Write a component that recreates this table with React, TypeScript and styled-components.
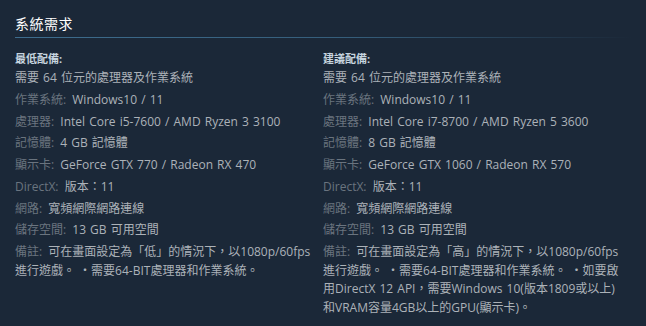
import React from 'react';
import styled, { createGlobalStyle } from 'styled-components';

const GlobalStyle = createGlobalStyle`
  html, body {
    margin: 0;
    padding: 0;
    background: #1b2838;
  }
  body {
    font-family: "Open Sans", "Noto Sans CJK TC", sans-serif;
  }
`;

const Page = styled.div`
  width: 646px;
  height: 326px;
  box-sizing: border-box;
  padding: 14px 15px 0 15px;
  background: #1b2838;
  overflow: hidden;
`;

const Title = styled.h2`
  margin: 0;
  padding: 0 0 3px 0;
  font-size: 14px;
  line-height: 20px;
  font-weight: normal;
  letter-spacing: 0.5px;
  color: #ffffff;
  border-bottom: 1px solid transparent;
  border-image: linear-gradient(90deg, #3e6d8e 0%, #355d7a 55%, rgba(27, 40, 56, 0) 100%) 1;
`;

const Columns = styled.div`
  display: grid;
  grid-template-columns: 302px 302px;
  column-gap: 6px;
  margin-top: 12px;
`;

const Column = styled.div`
  display: flex;
  flex-direction: column;
`;

const ColumnHead = styled.div`
  font-size: 11px;
  line-height: 18px;
  font-weight: bold;
  color: #c6d4df;
  margin-bottom: 1px;
`;

const SpecList = styled.ul`
  list-style: none;
  margin: 0;
  padding: 0;
`;

const Spec = styled.li`
  font-size: 12px;
  line-height: 18.5px;
  word-spacing: 1px;
  color: #acb2b8;
  margin-bottom: 3.25px;
`;

const Label = styled.span`
  color: #6a747f;
  margin-right: 2px;
`;

interface Requirement {
  label?: string;
  value: string;
}

interface SpecColumn {
  heading: string;
  items: Requirement[];
}

const columns: SpecColumn[] = [
  {
    heading: '最低配備:',
    items: [
      { value: '需要 64 位元的處理器及作業系統' },
      { label: '作業系統:', value: 'Windows10 / 11' },
      { label: '處理器:', value: 'Intel Core i5-7600 / AMD Ryzen 3 3100' },
      { label: '記憶體:', value: '4 GB 記憶體' },
      { label: '顯示卡:', value: 'GeForce GTX 770 / Radeon RX 470' },
      { label: 'DirectX:', value: '版本：11' },
      { label: '網路:', value: '寬頻網際網路連線' },
      { label: '儲存空間:', value: '13 GB 可用空間' },
      {
        label: '備註:',
        value: '可在畫面設定為「低」的情況下，以1080p/60fps進行遊戲。 ・需要64-BIT處理器和作業系統。',
      },
    ],
  },
  {
    heading: '建議配備:',
    items: [
      { value: '需要 64 位元的處理器及作業系統' },
      { label: '作業系統:', value: 'Windows10 / 11' },
      { label: '處理器:', value: 'Intel Core i7-8700 / AMD Ryzen 5 3600' },
      { label: '記憶體:', value: '8 GB 記憶體' },
      { label: '顯示卡:', value: 'GeForce GTX 1060 / Radeon RX 570' },
      { label: 'DirectX:', value: '版本：11' },
      { label: '網路:', value: '寬頻網際網路連線' },
      { label: '儲存空間:', value: '13 GB 可用空間' },
      {
        label: '備註:',
        value:
          '可在畫面設定為「高」的情況下，以1080p/60fps進行遊戲。 ・需要64-BIT處理器和作業系統。 ・如要啟用DirectX 12 API，需要Windows 10(版本1809或以上)和VRAM容量4GB以上的GPU(顯示卡)。',
      },
    ],
  },
];

export default function App() {
  return (
    <>
      <GlobalStyle />
      <Page>
        <Title>系統需求</Title>
        <Columns>
          {columns.map((col) => (
            <Column key={col.heading}>
              <ColumnHead>{col.heading}</ColumnHead>
              <SpecList>
                {col.items.map((item, i) => (
                  <Spec key={i}>
                    {item.label && <><Label>{item.label}</Label> </>}
                    {item.value}
                  </Spec>
                ))}
              </SpecList>
            </Column>
          ))}
        </Columns>
      </Page>
    </>
  );
}
